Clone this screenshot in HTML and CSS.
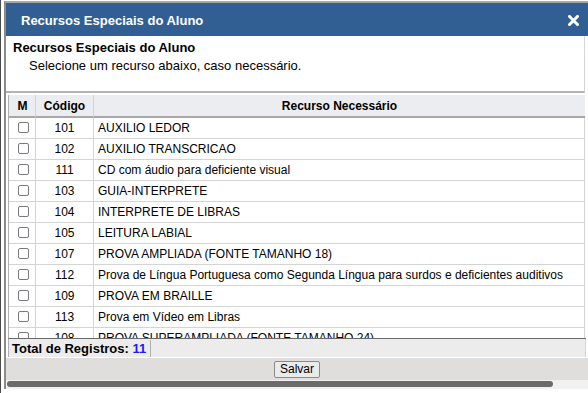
FILE: index.html
```html
<!DOCTYPE html>
<html lang="pt-BR">
<head>
    <meta charset="UTF-8">
    <meta name="viewport" content="width=device-width, initial-scale=1.0">
    <title>Recursos Especiais do Aluno</title>
    <link rel="stylesheet" href="styles.css">
</head>
<body>
    <div class="frame">
        <div class="dialog">
            <div class="titlebar">
                <span class="title">Recursos Especiais do Aluno</span>
                <span class="close">
                    <svg width="11" height="11" viewBox="0 0 11 11">
                        <path d="M1.5 1.5 L9.5 9.5 M9.5 1.5 L1.5 9.5" stroke="#fff" stroke-width="3" stroke-linecap="square"/>
                    </svg>
                </span>
            </div>

            <div class="intro">
                <div class="intro-title">Recursos Especiais do Aluno</div>
                <div class="intro-text">Selecione um recurso abaixo, caso necessário.</div>
            </div>

            <div class="grid">
                <div class="grid-scroll">
                    <table class="grid-table">
                        <thead>
                            <tr>
                                <th class="col-m">M</th>
                                <th class="col-cod">Código</th>
                                <th>Recurso Necessário</th>
                            </tr>
                        </thead>
                        <tbody>
                            <tr><td class="col-m"><span class="check"></span></td><td class="col-cod">101</td><td>AUXILIO LEDOR</td></tr>
                            <tr><td class="col-m"><span class="check"></span></td><td class="col-cod">102</td><td>AUXILIO TRANSCRICAO</td></tr>
                            <tr><td class="col-m"><span class="check"></span></td><td class="col-cod">111</td><td>CD com áudio para deficiente visual</td></tr>
                            <tr><td class="col-m"><span class="check"></span></td><td class="col-cod">103</td><td>GUIA-INTERPRETE</td></tr>
                            <tr><td class="col-m"><span class="check"></span></td><td class="col-cod">104</td><td>INTERPRETE DE LIBRAS</td></tr>
                            <tr><td class="col-m"><span class="check"></span></td><td class="col-cod">105</td><td>LEITURA LABIAL</td></tr>
                            <tr><td class="col-m"><span class="check"></span></td><td class="col-cod">107</td><td>PROVA AMPLIADA (FONTE TAMANHO 18)</td></tr>
                            <tr><td class="col-m"><span class="check"></span></td><td class="col-cod">112</td><td>Prova de Língua Portuguesa como Segunda Língua para surdos e deficientes auditivos</td></tr>
                            <tr><td class="col-m"><span class="check"></span></td><td class="col-cod">109</td><td>PROVA EM BRAILLE</td></tr>
                            <tr><td class="col-m"><span class="check"></span></td><td class="col-cod">113</td><td>Prova em Vídeo em Libras</td></tr>
                            <tr><td class="col-m"><span class="check"></span></td><td class="col-cod">108</td><td>PROVA SUPERAMPLIADA (FONTE TAMANHO 24)</td></tr>
                        </tbody>
                    </table>
                </div>
                <div class="grid-footer">
                    <span class="total">Total de Registros: <b class="count">11</b></span>
                </div>
            </div>

            <div class="buttonbar">
                <button class="btn">Salvar</button>
            </div>
            <div class="hscroll">
                <div class="hscroll-thumb"></div>
            </div>
        </div>
    </div>
</body>
</html>
```

FILE: styles.css
```css
/* Recursos especiais - janela modal */
html, body {
    margin: 0;
    padding: 0;
    background-color: #fff;
    font-family: "Liberation Sans", Arial, sans-serif;
    color: #000;
}

.frame {
    height: 393px;
    border-left: 1px solid #4a4a4a;
    padding-left: 3px;
    padding-top: 1px;
    box-sizing: border-box;
}

.dialog {
    width: 582px;
    border-left: 2px solid #8c8c8c;
    border-top: 2px solid #a6a6a6;
    background-color: #fff;
}

.titlebar {
    display: flex;
    align-items: center;
    justify-content: space-between;
    height: 33px;
    padding: 2px 9px 0 15px;
    box-sizing: border-box;
    background-color: #325f93;
    color: #fff;
}

.title {
    font-size: 13px;
    font-weight: bold;
}

.close {
    display: flex;
}

.intro {
    height: 57px;
    padding: 4px 0 0 7px;
    box-sizing: border-box;
    border-bottom: 2px solid #b4b4b4;
    margin-right: 3px;
    border-right: 1px solid #d6d6d6;
}

.intro-title {
    font-size: 13px;
    font-weight: bold;
    line-height: 15px;
}

.intro-text {
    font-size: 13px;
    line-height: 15px;
    margin-top: 3px;
    padding-left: 16px;
}

.grid {
    margin-left: 2px;
    margin-right: 2px;
    margin-top: 2px;
}

.grid-scroll {
    height: 243px;
    overflow: hidden;
    border-left: 1px solid #b0b0b0;
    border-bottom: 1px solid #6a6a6a;
}

.grid-table {
    width: 576px;
    border-collapse: separate;
    border-spacing: 0;
    font-size: 12px;
}

.grid-table th {
    height: 21px;
    padding: 0;
    background-color: #ecedf1;
    font-weight: bold;
    font-size: 12px;
    border-bottom: 2px solid #a8a8a8;
    border-left: 1px solid #d4d4d4;
}

.grid-table td {
    height: 20px;
    padding: 0 0 0 4px;
    border-bottom: 1px solid #d4d4d4;
    border-left: 1px solid #d4d4d4;
    white-space: nowrap;
}

.grid-table td:last-child {
    border-right: 1px solid #d4d4d4;
}

.grid-table th:first-child,
.grid-table td:first-child {
    border-left: none;
}

.grid-table .col-m {
    width: 25px;
    padding: 0 0 0 1px;
    text-align: center;
}

.grid-table .col-cod {
    width: 57px;
    padding: 0;
    text-align: center;
}

.check {
    display: inline-block;
    width: 9px;
    height: 9px;
    border: 1.5px solid #7a7a80;
    border-radius: 2px;
    background-color: #fff;
    vertical-align: middle;
    margin-top: -2px;
    margin-left: 2px;
}

.grid-footer {
    height: 18px;
    display: flex;
    align-items: center;
    background-color: #ececec;
    border-left: 1px solid #b0b0b0;
    border-right: 1px solid #d6d6d6;
}

.total {
    font-size: 13px;
    font-weight: bold;
    padding: 1px 4px 0 3px;
    border-right: 1px solid #b0b0b0;
    line-height: 16px;
}

.count {
    color: #1a1aff;
}

.buttonbar {
    height: 22px;
    display: flex;
    justify-content: center;
    align-items: center;
    background-color: #dfdedc;
    margin-top: 1px;
}

.btn {
    font-family: "Liberation Sans", Arial, sans-serif;
    font-size: 12px;
    height: 17px;
    padding: 0 5px;
    background-color: #ebebeb;
    border: 1px solid #8a8a8a;
    border-radius: 2px;
    color: #000;
}

.hscroll {
    height: 9px;
    padding-top: 1px;
    box-sizing: border-box;
    background-color: #f1f1f1;
}

.hscroll-thumb {
    width: 546px;
    height: 6px;
    margin-left: 1px;
    border-radius: 3px;
    background-color: #6b6b6b;
}
```
